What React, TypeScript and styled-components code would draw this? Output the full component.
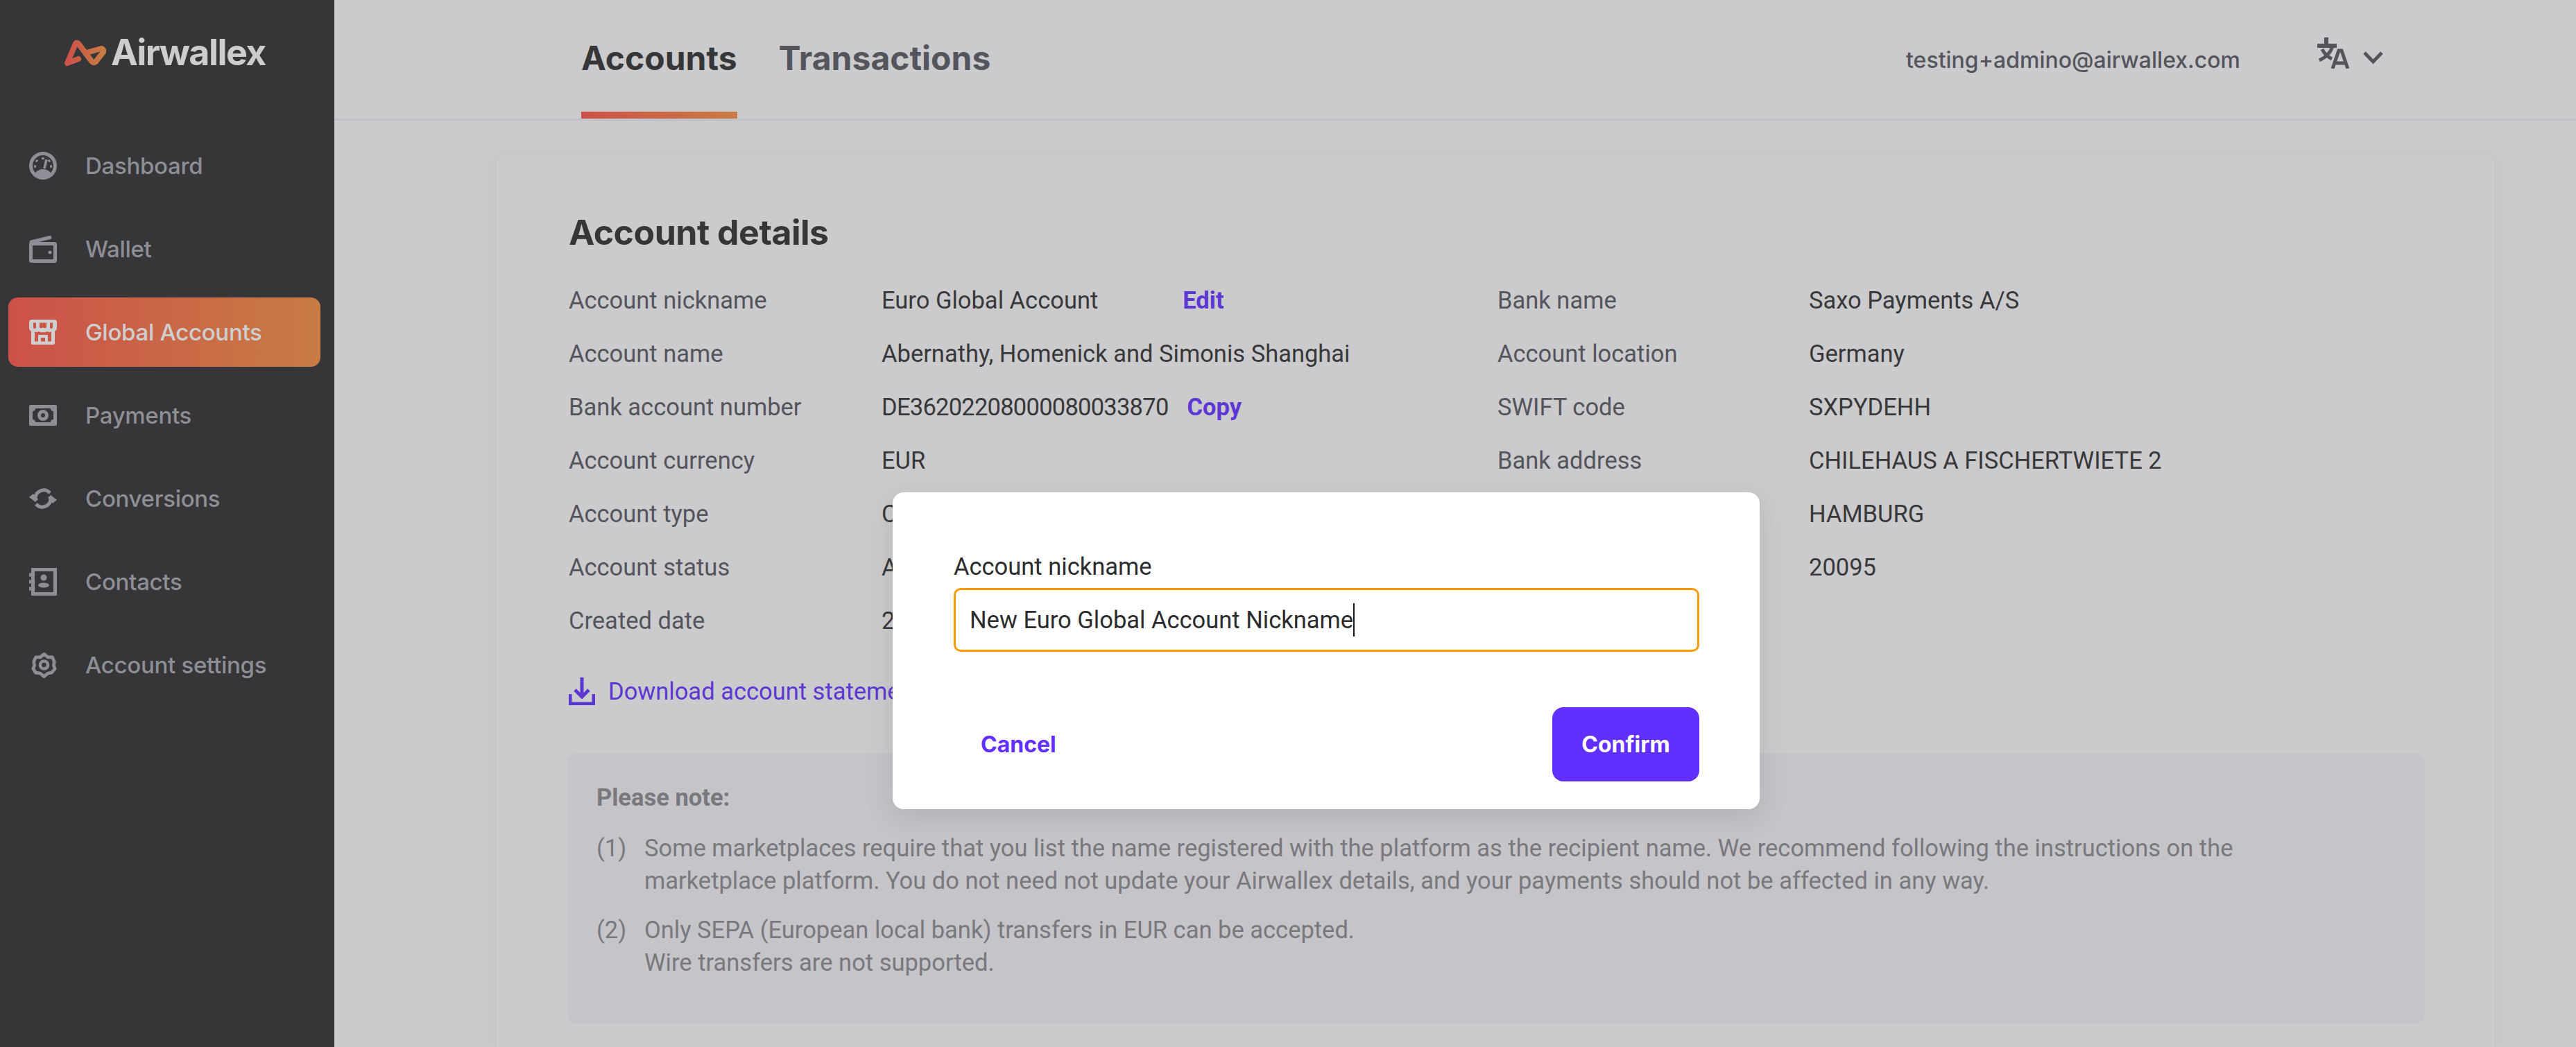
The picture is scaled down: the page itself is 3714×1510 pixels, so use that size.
import React from "react";
import styled, { createGlobalStyle } from "styled-components";

const Global = createGlobalStyle`
  html, body { margin: 0; padding: 0; height: 1510px; overflow: hidden; background: #cbcbcd; }
  * { box-sizing: border-box; }
  #root { height: 1510px; }
`;

const HEAD = `"Inter", "Liberation Sans", sans-serif`;
const BODY = `"Roboto", "Liberation Sans", sans-serif`;

const Page = styled.div`
  position: relative;
  display: flex;
  width: 3714px;
  height: 1510px;
  overflow: hidden;
  background: #cbcbcd;
`;
const Sidebar = styled.aside`
  width: 482px;
  flex: none;
  background: #363638;
  display: flex;
  flex-direction: column;
  padding: 0 20px 0 12px;
`;
const Logo = styled.div`
  height: 189px;
  display: flex;
  align-items: flex-start;
  padding: 56px 0 0 80px;
  gap: 6px;
`;
const Wordmark = styled.span`
  font-family: ${HEAD};
  font-weight: 700;
  font-size: 52px;
  line-height: 40px;
  letter-spacing: -1.6px;
  color: #cdcdcf;
`;
const NavItem = styled.div<{ $active?: boolean }>`
  height: 100px;
  margin-bottom: 20px;
  display: flex;
  align-items: center;
  padding-left: 30px;
  border-radius: 14px;
  gap: 41px;
  font-family: ${HEAD};
  font-weight: 500;
  font-size: 33px;
  letter-spacing: -0.3px;
  color: ${(p) => (p.$active ? "#cfcfd1" : "#8e8e96")};
  background: ${(p) => (p.$active ? "linear-gradient(90deg, #cc5149, #c87c44)" : "none")};
  svg { width: 40px; height: 40px; flex: none; }
`;
const Main = styled.main`
  flex: 1;
  min-width: 0;
  display: flex;
  flex-direction: column;
`;
const Header = styled.header`
  height: 174px;
  flex: none;
  border-bottom: 3px solid #c1c0c7;
  display: flex;
  align-items: stretch;
  justify-content: space-between;
  padding: 0 278px 0 356px;
`;
const Tabs = styled.nav`
  display: flex;
  gap: 60px;
`;
const Tab = styled.div<{ $active?: boolean }>`
  position: relative;
  padding-top: 54px;
  font-family: ${HEAD};
  font-weight: 700;
  font-size: 48px;
  line-height: 60px;
  color: ${(p) => (p.$active ? "#363638" : "#54545c")};
  ${(p) =>
    p.$active
      ? `&::after { content: ""; position: absolute; left: 0; right: 0; bottom: 0; height: 10px; background: linear-gradient(90deg, #cc5149, #c87c44); }`
      : ""}
`;
const UserArea = styled.div`
  display: flex;
  align-items: flex-start;
`;
const Email = styled.span`
  margin: 64px 110px 0 0;
  font-family: ${HEAD};
  font-weight: 500;
  font-size: 32px;
  line-height: 46px;
  color: #54545c;
`;
const Lang = styled.div`
  display: flex;
  align-items: flex-start;
  gap: 20px;
  padding-top: 53px;
  color: #54545c;
`;
const Content = styled.div`
  flex: 1;
  min-height: 0;
  padding: 49px 118px 0 234px;
`;
const Card = styled.section`
  height: 100%;
  background: #cbcbcd;
  border-radius: 14px 14px 0 0;
  box-shadow: 0 0 24px rgba(60, 60, 70, 0.05);
  padding: 79px 100px 0 104px;
`;
const Title = styled.h1`
  margin: 0 0 26px;
  font-family: ${HEAD};
  font-weight: 700;
  font-size: 50px;
  line-height: 66px;
  letter-spacing: -0.5px;
  color: #363638;
`;
const Details = styled.div`
  display: grid;
  grid-template-columns: 1339px 1fr;
`;
const Column = styled.dl`
  margin: 0;
`;
const Row = styled.div<{ $valueAt: number }>`
  display: grid;
  grid-template-columns: ${(p) => p.$valueAt}px 1fr;
  height: 77px;
  align-items: center;
`;
const Label = styled.dt`
  font-family: ${BODY};
  font-size: 34.5px;
  color: #54545c;
`;
const Value = styled.dd`
  margin: 0;
  display: flex;
  font-family: ${BODY};
  font-size: 34.5px;
  color: #38383a;
  white-space: nowrap;
`;
const AccountNumber = styled.span`
  letter-spacing: -0.75px;
`;
const InlineLink = styled.span<{ $gap: number }>`
  margin-left: ${(p) => p.$gap}px;
  font-weight: 700;
  color: #5c37d2;
`;
const Download = styled.div`
  margin-top: 42px;
  display: flex;
  align-items: center;
  gap: 19px;
  height: 44px;
  font-family: ${BODY};
  font-size: 34.5px;
  color: #5c37d2;
`;
const Note = styled.div`
  margin: 67px 0 0 -2px;
  height: 390px;
  border-radius: 14px;
  background: #c5c4c9;
  padding: 41px 42px;
  font-family: ${BODY};
  font-size: 34.5px;
  line-height: 47px;
  color: #79787d;
`;
const NoteTitle = styled.div`
  font-weight: 700;
  margin-bottom: 26px;
`;
const NoteItem = styled.div`
  display: grid;
  grid-template-columns: 69px 1fr;
  margin-bottom: 24px;
`;
const Modal = styled.div`
  position: absolute;
  left: 1287px;
  top: 710px;
  width: 1250px;
  height: 457px;
  background: #fff;
  border-radius: 16px;
  box-shadow: 0 12px 40px rgba(40, 40, 50, 0.12);
  padding: 86px 87px 0 88px;
`;
const ModalLabel = styled.div`
  font-family: ${BODY};
  font-size: 34.5px;
  line-height: 42px;
  color: #2c2c2e;
  margin-bottom: 10px;
`;
const FieldBox = styled.div`
  height: 92px;
  border: 3px solid #ff9b00;
  border-radius: 10px;
  display: flex;
  align-items: center;
  padding-left: 20px;
  font-family: ${BODY};
  font-size: 34.5px;
  color: #2c2c2e;
`;
const Caret = styled.span`
  width: 2px;
  height: 48px;
  background: #1a1a1c;
  flex: none;
`;
const ModalActions = styled.div`
  margin-top: 80px;
  display: flex;
  align-items: center;
  justify-content: space-between;
  padding-left: 39px;
`;
const Cancel = styled.span`
  font-family: ${HEAD};
  font-weight: 700;
  font-size: 32px;
  color: #612fff;
`;
const Confirm = styled.button`
  width: 212px;
  height: 107px;
  border: 0;
  border-radius: 16px;
  background: #612fff;
  color: #fff;
  font-family: ${HEAD};
  font-weight: 700;
  font-size: 32px;
`;

const LogoMark = () => (
  <svg width="62" height="40" viewBox="0 0 62 40" fill="none">
    <defs>
      <linearGradient id="lg" x1="0" x2="1" y1="0" y2="0">
        <stop offset="0" stopColor="#cc5149" />
        <stop offset="1" stopColor="#c87c44" />
      </linearGradient>
    </defs>
    <path
      d="M21 29 L5 35 L16 9 Q18 3 22 8 L39 31 Q42 36 46 33 L57 19 Q58 15 54 14 L36 19"
      stroke="url(#lg)"
      strokeWidth="8"
      strokeLinejoin="round"
      strokeLinecap="round"
    />
  </svg>
);

const IconDashboard = () => (
  <svg viewBox="0 0 40 40" fill="none">
    <circle cx="20" cy="20" r="17.5" stroke="currentColor" strokeWidth="5" />
    <path d="M20 8v3M10 12l2 2M30 12l-2 2M7 21h3M30 21h3" stroke="currentColor" strokeWidth="3.5" />
    <path d="M25 11l-3 13" stroke="currentColor" strokeWidth="3.5" />
    <path d="M8 32c3-5 7-7 12-7s9 2 12 7c-3 4-7 6-12 6s-9-2-12-6z" fill="currentColor" />
  </svg>
);
const IconWallet = () => (
  <svg viewBox="0 0 40 40" fill="none">
    <rect x="2.5" y="12.5" width="35" height="25" rx="1" stroke="currentColor" strokeWidth="5" />
    <path d="M3 10L30 3.5" stroke="currentColor" strokeWidth="5" strokeLinecap="round" />
    <circle cx="30" cy="25" r="2.5" fill="currentColor" />
  </svg>
);
const IconStore = () => (
  <svg viewBox="0 0 40 40">
    <path
      fill="currentColor"
      fillRule="evenodd"
      d="M4 2h32a4 4 0 0 1 4 4v8a5 5 0 0 1-3 4.6V36a2 2 0 0 1-2 2H5a2 2 0 0 1-2-2V18.6A5 5 0 0 1 0 14V6a4 4 0 0 1 4-4zM6 6.500v6.500a2 2 0 0 0 4 0V6.500zM15 6.500v6.500a3 3 0 0 0 5 0 3 3 0 0 0 5 0V6.500zM30 6.500v6.500a2 2 0 0 0 4 0V6.500zM8 19.500V33.500h5V24h14v9.500h5V19.500a7 7 0 0 1-6-.500 8 8 0 0 1-6 1 8 8 0 0 1-6-1 7 7 0 0 1-6 .500zM17 28v5.500h6V28z"
    />
  </svg>
);
const IconPayments = () => (
  <svg viewBox="0 0 40 30" style={{ height: 30 }}>
    <path
      fill="currentColor"
      fillRule="evenodd"
      d="M2 0h36a2 2 0 0 1 2 2v26a2 2 0 0 1-2 2H2a2 2 0 0 1-2-2V2a2 2 0 0 1 2-2zM9 5a4 4 0 0 1-4 4v12a4 4 0 0 1 4 4h22a4 4 0 0 1 4-4V9a4 4 0 0 1-4-4zM20 7a8 8 0 1 1 0 16 8 8 0 0 1 0-16zM20 12a3 3 0 1 0 0 6 3 3 0 0 0 0-6z"
    />
  </svg>
);
const IconConversions = () => (
  <svg viewBox="0 0 40 34" style={{ height: 34 }} fill="none">
    <path d="M9 16A12 12 0 0 1 30 9" stroke="currentColor" strokeWidth="5" />
    <path d="M31 18A12 12 0 0 1 10 25" stroke="currentColor" strokeWidth="5" />
    <path d="M0 15l6-5 7 8-4 4z" fill="currentColor" />
    <path d="M40 19l-6 5-7-8 4-4z" fill="currentColor" />
  </svg>
);
const IconContacts = () => (
  <svg viewBox="0 0 40 40" fill="none">
    <rect x="5.500" y="2.500" width="32" height="35" stroke="currentColor" strokeWidth="5" />
    <path d="M0 10h6M0 20h6M0 30h6" stroke="currentColor" strokeWidth="5" strokeLinecap="round" />
    <circle cx="21" cy="14" r="4.500" fill="currentColor" />
    <ellipse cx="21" cy="25" rx="8" ry="3.500" fill="currentColor" />
  </svg>
);
const IconSettings = () => (
  <svg viewBox="0 0 40 40" fill="none" style={{ paddingLeft: 3 }}>
    <path
      d="M20 3l6 5 7 0 3 7-1 6 2 5-5 6-6 1-6 5-6-5-7-1-4-6 2-5-1-6 3-7 7 0z"
      stroke="currentColor"
      strokeWidth="5"
      strokeLinejoin="round"
    />
    <circle cx="20" cy="20" r="6" stroke="currentColor" strokeWidth="5" />
  </svg>
);
const IconTranslate = () => (
  <svg width="47" height="46" viewBox="0 0 47 46" fill="none">
    <path d="M1 13h28M14 1v11" stroke="currentColor" strokeWidth="6" />
    <path d="M23 14c-3 9-10 16-19 20M8 18c3 6 8 11 14 14" stroke="currentColor" strokeWidth="5" />
    <path d="M23 46L32 20h4l9 26M27 38h14" stroke="currentColor" strokeWidth="5" />
  </svg>
);
const IconChevron = () => (
  <svg width="29" height="46" viewBox="0 0 29 46" fill="none">
    <path d="M2 23l12.500 13L27 23" stroke="currentColor" strokeWidth="5" />
  </svg>
);
const IconDownload = () => (
  <svg width="38" height="40" viewBox="0 0 38 40" fill="none">
    <path d="M2 24v14h34V24" stroke="currentColor" strokeWidth="5" />
    <path d="M19 0v27M9 18l10 10 10-10" stroke="currentColor" strokeWidth="5" />
  </svg>
);

const nav = [
  { label: "Dashboard", Icon: IconDashboard },
  { label: "Wallet", Icon: IconWallet },
  { label: "Global Accounts", Icon: IconStore, active: true },
  { label: "Payments", Icon: IconPayments },
  { label: "Conversions", Icon: IconConversions },
  { label: "Contacts", Icon: IconContacts },
  { label: "Account settings", Icon: IconSettings },
];

export default function App() {
  return (
    <Page>
      <Global />
      <Sidebar>
        <Logo>
          <LogoMark />
          <Wordmark>Airwallex</Wordmark>
        </Logo>
        {nav.map(({ label, Icon, active }) => (
          <NavItem key={label} $active={active}>
            <Icon />
            {label}
          </NavItem>
        ))}
      </Sidebar>
      <Main>
        <Header>
          <Tabs>
            <Tab $active>Accounts</Tab>
            <Tab>Transactions</Tab>
          </Tabs>
          <UserArea>
            <Email>testing+admino@airwallex.com</Email>
            <Lang>
              <IconTranslate />
              <IconChevron />
            </Lang>
          </UserArea>
        </Header>
        <Content>
          <Card>
            <Title>Account details</Title>
            <Details>
              <Column>
                <Row $valueAt={451}>
                  <Label>Account nickname</Label>
                  <Value>
                    Euro Global Account<InlineLink $gap={122}>Edit</InlineLink>
                  </Value>
                </Row>
                <Row $valueAt={451}>
                  <Label>Account name</Label>
                  <Value>Abernathy, Homenick and Simonis Shanghai</Value>
                </Row>
                <Row $valueAt={451}>
                  <Label>Bank account number</Label>
                  <Value>
                    <AccountNumber>DE36202208000080033870</AccountNumber>
                    <InlineLink $gap={27}>Copy</InlineLink>
                  </Value>
                </Row>
                <Row $valueAt={451}>
                  <Label>Account currency</Label>
                  <Value>EUR</Value>
                </Row>
                <Row $valueAt={451}>
                  <Label>Account type</Label>
                  <Value>Current</Value>
                </Row>
                <Row $valueAt={451}>
                  <Label>Account status</Label>
                  <Value>Active</Value>
                </Row>
                <Row $valueAt={451}>
                  <Label>Created date</Label>
                  <Value>2019-08-20</Value>
                </Row>
              </Column>
              <Column>
                <Row $valueAt={449}>
                  <Label>Bank name</Label>
                  <Value>Saxo Payments A/S</Value>
                </Row>
                <Row $valueAt={449}>
                  <Label>Account location</Label>
                  <Value>Germany</Value>
                </Row>
                <Row $valueAt={449}>
                  <Label>SWIFT code</Label>
                  <Value>SXPYDEHH</Value>
                </Row>
                <Row $valueAt={449}>
                  <Label>Bank address</Label>
                  <Value>CHILEHAUS A FISCHERTWIETE 2</Value>
                </Row>
                <Row $valueAt={449}>
                  <Label>City</Label>
                  <Value>HAMBURG</Value>
                </Row>
                <Row $valueAt={449}>
                  <Label>Postal code</Label>
                  <Value>20095</Value>
                </Row>
              </Column>
            </Details>
            <Download>
              <IconDownload />
              Download account statement
            </Download>
            <Note>
              <NoteTitle>Please note:</NoteTitle>
              <NoteItem>
                <span>(1)</span>
                <span>
                  Some marketplaces require that you list the name registered with the platform as the recipient name. We recommend following the instructions on the
                  <br />
                  marketplace platform. You do not need not update your Airwallex details, and your payments should not be affected in any way.
                </span>
              </NoteItem>
              <NoteItem>
                <span>(2)</span>
                <span>
                  Only SEPA (European local bank) transfers in EUR can be accepted.
                  <br />
                  Wire transfers are not supported.
                </span>
              </NoteItem>
            </Note>
          </Card>
        </Content>
      </Main>
      <Modal>
        <ModalLabel>Account nickname</ModalLabel>
        <FieldBox>
          New Euro Global Account Nickname
          <Caret />
        </FieldBox>
        <ModalActions>
          <Cancel>Cancel</Cancel>
          <Confirm>Confirm</Confirm>
        </ModalActions>
      </Modal>
    </Page>
  );
}
